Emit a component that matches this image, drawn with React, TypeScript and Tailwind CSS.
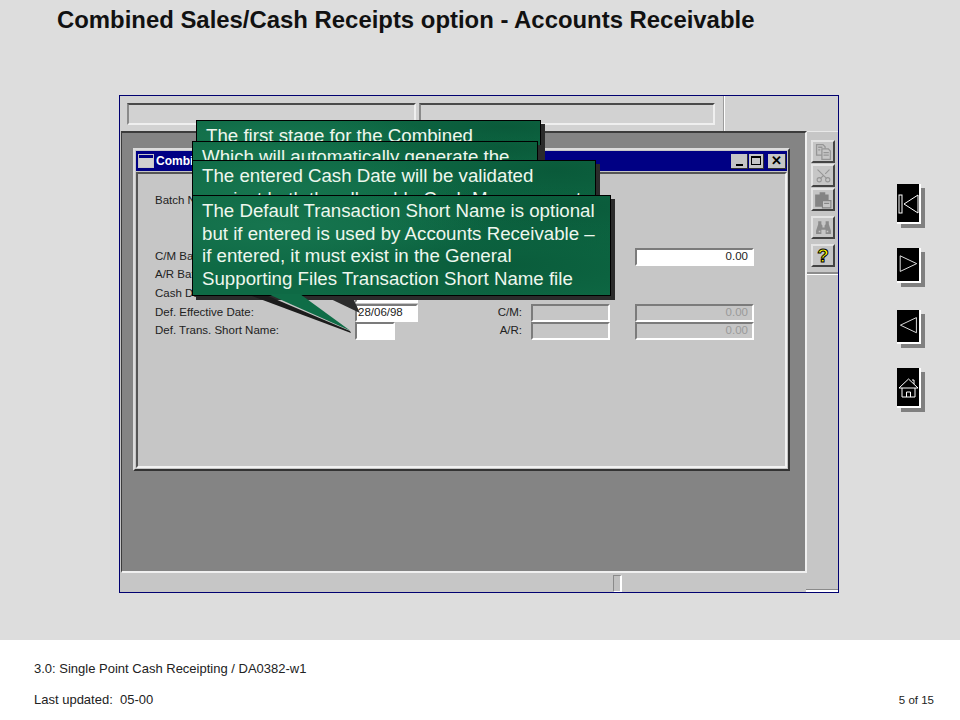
import type { ReactNode } from "react"
import { Scissors } from "lucide-react"

const sunken = "border-2 border-t-[#7b7b7b] border-l-[#7b7b7b] border-r-white border-b-white"

function Field({ className, value, disabled }: { className: string; value?: string; disabled?: boolean }) {
  return (
    <div className={`h-[18px] shrink-0 flex items-center justify-end px-1 text-[11.5px] ${sunken} ${className} ${disabled ? "text-[#9a9a9a]" : "bg-white text-[#222]"}`}>
      {value}
    </div>
  )
}

function FormRow({ label, left, right, className }: { label: string; left?: ReactNode; right?: ReactNode; className?: string }) {
  return (
    <div className={`flex items-center h-[18px] text-[11.5px] text-[#222] ${className ?? ""}`}>
      <div className="w-[200px] shrink-0 whitespace-nowrap">{label}</div>
      <div className="w-[176px] shrink-0 flex">{left}</div>
      <div className="flex items-center">{right}</div>
    </div>
  )
}

function Callout({ className, lines }: { className: string; lines: string[] }) {
  return (
    <div className={`absolute border border-black bg-[#0e6a45] bg-[radial-gradient(ellipse_at_20%_30%,#17754f_0%,transparent_45%),radial-gradient(ellipse_at_75%_70%,#0a5c3b_0%,transparent_50%),radial-gradient(ellipse_at_90%_10%,#0a5a3a_0%,transparent_40%)] pl-[9px] pt-[4px] text-[18.7px] leading-[22.5px] text-[#eef7ee] whitespace-nowrap shadow-[4px_4px_0_#2b2b2b] ${className}`}>
      {lines.map((l) => (
        <div key={l}>{l}</div>
      ))}
    </div>
  )
}

function ToolButton({ children, className }: { children: ReactNode; className?: string }) {
  return (
    <div className={`w-[24px] h-[23px] flex items-center justify-center bg-[#c6c6c6] border-t-2 border-l-2 border-t-[#e4e4e4] border-l-[#e4e4e4] border-r-2 border-b-2 border-r-[#444] border-b-[#444] ${className ?? ""}`}>
      {children}
    </div>
  )
}

function NavButton({ height, className, children }: { height: string; className?: string; children: ReactNode }) {
  return (
    <div className={`w-[24px] bg-black border-r-2 border-b-2 border-white shadow-[4px_4px_0_#808080] ${height} ${className ?? ""}`}>
      <svg viewBox="0 0 22 38" className="w-full h-full" fill="none" stroke="#ffffff" strokeWidth="1">
        {children}
      </svg>
    </div>
  )
}

export default function App() {
  return (
    <div className="w-[960px] h-[720px] flex flex-col overflow-hidden font-['Liberation_Sans',Arial,sans-serif]">
      <main className="h-[640px] bg-[#dddddd]">
        <h1 className="h-[95px] pl-[57px] pt-[7px] text-[23.9px] leading-[26px] font-bold text-[#111]">
          Combined Sales/Cash Receipts option - Accounts Receivable
        </h1>

        <div className="flex">
          {/* Application window */}
          <div className="relative ml-[119px] w-[720px] h-[498px] border border-[#000070] bg-[#c6c6c6] flex flex-col">
            <div className="h-[35px] shrink-0 bg-[#d2d2d2] flex pl-[7px] pt-[7px]">
              <div className="w-[289px] h-[22px] border-2 border-t-[#4a4a4a] border-l-[#8a8a8a] border-r-[#efefef] border-b-[#efefef]" />
              <div className="ml-[3px] w-[296px] h-[22px] border-2 border-t-[#4a4a4a] border-l-[#8a8a8a] border-r-[#efefef] border-b-[#efefef]" />
              <div className="ml-[8px] -mt-[7px] w-[2px] h-[35px] bg-[#9c9c9c] border-r border-white" />
            </div>

            <div className="h-[442px] shrink-0 flex">
              {/* MDI area */}
              <div className="ml-px w-[686px] bg-[#848484] border-t-2 border-l border-r-2 border-b-2 border-t-[#3c3c3c] border-l-[#3c3c3c] border-r-[#f0f0f0] border-b-[#f0f0f0] pl-[11px] pt-[15px]">
                <div className="w-[657px] h-[323px] bg-[#c6c6c6] border-2 border-t-[#dcdcdc] border-l-[#dcdcdc] border-r-[#333] border-b-[#333] p-px flex flex-col">
                  <div className="h-[20px] shrink-0 bg-[#000084] flex items-center pl-[2px] pr-[1px]">
                    <div className="ml-px w-[14px] h-[12px] bg-[#d0d0d0] border-t-[3px] border-[#000084] outline outline-[#c6c6c6]" />
                    <span className="ml-[3px] text-[12px] font-bold text-white">Combined Sales/Cash Receipts</span>
                    <div className="ml-auto flex items-center">
                      <div className="w-[17px] h-[15px] bg-[#c6c6c6] border-r border-b border-[#333] flex items-end justify-center pb-[2px]">
                        <div className="w-[7px] h-[2px] bg-black" />
                      </div>
                      <div className="ml-px w-[15px] h-[15px] bg-[#c6c6c6] border-r border-b border-[#333] flex items-center justify-center">
                        <div className="w-[10px] h-[9px] border border-t-2 border-black" />
                      </div>
                      <div className="ml-[4px] w-[18px] h-[15px] bg-[#c6c6c6] border-r border-b border-[#333] flex items-center justify-center text-[13px] leading-none font-bold text-black">
                        ✕
                      </div>
                    </div>
                  </div>

                  <div className="flex-1 mt-px border-2 border-t-[#555] border-l-[#555] border-r-[#f2f2f2] border-b-[#f2f2f2] pl-[17px] pt-[18px]">
                    <FormRow label="Batch Number:" />
                    <FormRow
                      className="mt-[38px]"
                      label="C/M Batch:"
                      right={
                        <>
                          <div className="w-[104px]" />
                          <Field className="w-[119px]" value="0.00" />
                        </>
                      }
                    />
                    <FormRow label="A/R Batch:" />
                    <FormRow className="mt-px" label="Cash Date:" left={<Field className="w-[63px]" />} />
                    <FormRow
                      className="mt-px"
                      label="Def. Effective Date:"
                      left={<Field className="w-[63px] !justify-start !px-px" value="28/06/98" />}
                      right={
                        <>
                          <span className="w-[32px] -ml-[41px] mr-[1px] text-right">C/M:</span>
                          <div className="ml-[8px]"><Field className="w-[79px]" disabled /></div>
                          <div className="ml-[25px]"><Field className="w-[119px]" value="0.00" disabled /></div>
                        </>
                      }
                    />
                    <FormRow
                      label="Def. Trans. Short Name:"
                      left={<Field className="w-[40px]" />}
                      right={
                        <>
                          <span className="w-[32px] -ml-[41px] mr-[1px] text-right">A/R:</span>
                          <div className="ml-[8px]"><Field className="w-[79px]" disabled /></div>
                          <div className="ml-[25px]"><Field className="w-[119px]" value="0.00" disabled /></div>
                        </>
                      }
                    />
                  </div>
                </div>
              </div>

              {/* Toolbar */}
              <div className="flex-1 flex flex-col">
                <div className="h-[143px] border-t border-t-[#e8e8e8] border-b-2 border-b-[#8c8c8c] pl-[4px] pt-[8px] flex flex-col">
                  <ToolButton>
                    <svg viewBox="0 0 16 16" className="w-[17px] h-[17px]" fill="none" stroke="#969696" strokeWidth="1.2">
                      <path d="M1.5 1.5h6l2 2v8h-8z" />
                      <path d="M6.5 5.5h6l2 2v8h-8z" fill="#c6c6c6" />
                      <path d="M3 4h4M3 6.5h2M8 9h5M8 11.5h5" />
                    </svg>
                  </ToolButton>
                  <ToolButton className="mt-px">
                    <Scissors className="w-[17px] h-[17px] -rotate-90 text-[#969696]" strokeWidth={1.5} />
                  </ToolButton>
                  <ToolButton className="mt-px">
                    <svg viewBox="0 0 16 16" className="w-[18px] h-[18px]">
                      <path d="M1 3h4V1h5v2h3v11H1z" fill="#848484" />
                      <path d="M7.5 8.5h7.5v6.5H7.5z" fill="#c6c6c6" stroke="#848484" />
                      <path d="M9 11h4.5" stroke="#848484" />
                    </svg>
                  </ToolButton>
                  <ToolButton className="mt-[5px]">
                    <svg viewBox="0 0 16 16" className="w-[17px] h-[17px]" fill="#8c8c8c">
                      <path d="M3 2h3v3l1 1v2h2V6l1-1V2h3v3l2 6v3H10v-4H6v4H1v-3l2-6z" />
                      <path d="M3.5 11h1.5v1.5H3.5zM11 11h1.5v1.5H11z" fill="#c6c6c6" />
                    </svg>
                  </ToolButton>
                  <ToolButton className="mt-[5px]">
                    <span className="text-[19px] leading-none font-bold text-[#ffff00] [-webkit-text-stroke:1px_#000]">?</span>
                  </ToolButton>
                </div>
                <div className="flex-1 border-t border-white" />
              </div>
            </div>

            {/* Status bar */}
            <div className="flex-1 flex items-end pl-[493px]">
              <div className="w-[9px] h-[17px] bg-[#c0c0c0] border border-t-[#8a8a8a] border-l-[#8a8a8a] border-r-2 border-r-white border-b-white" />
              <div className="ml-auto w-[32px] h-[3px] border-t border-t-[#8a8a8a] border-b-2 border-b-white" />
            </div>

            {/* Stacked callouts, each one covers the one before */}
            <Callout className="left-[76px] top-[24px] w-[345px] h-[60px]" lines={["The first stage for the Combined"]} />
            <Callout className="left-[72px] top-[45px] w-[346px] h-[60px]" lines={["Which will automatically generate the"]} />
            <Callout
              className="left-[72px] top-[64px] w-[404px] h-[100px]"
              lines={["The entered Cash Date will be validated", "against both the allowable Cash Management"]}
            />
            <svg className="absolute left-[120px] top-[190px] w-[120px] h-[60px]" viewBox="0 0 120 60">
              <path d="M76 6h34l10 21z" fill="#2b2b2b" />
            </svg>
            <Callout
              className="left-[72px] top-[99px] w-[419px] h-[101px]"
              lines={[
                "The Default Transaction Short Name is optional",
                "but if entered is used by Accounts Receivable –",
                "if entered, it must exist in the General",
                "Supporting Files Transaction Short Name file",
              ]}
            />
            {/* Pointer of the top callout */}
            <svg className="absolute left-[130px] top-[198px] w-[102px] h-[40px]" viewBox="0 0 102 40">
              <path d="M2 2h16l82 35 1 2z" fill="#1c1c1c" />
              <path d="M18 0h32l50 36.5z" fill="#0f6d47" />
            </svg>
          </div>

          {/* Slide navigation */}
          <nav className="ml-[58px] mt-[89px] flex flex-col">
            <NavButton height="h-[40px]">
              <rect x="2" y="11" width="3" height="18" />
              <path d="M7 20l14-9v18z" />
            </NavButton>
            <NavButton height="h-[35px] mt-[24px]">
              <path d="M2 9v18l19-9z" />
            </NavButton>
            <NavButton height="h-[34px] mt-[27px]">
              <path d="M2 18l19-9v18z" />
            </NavButton>
            <NavButton height="h-[40px] mt-[24px]">
              <path d="M2 20l9.5-9 9.5 9z" />
              <path d="M5 20v9h13v-9M9.5 29v-5h4v5" />
              <path d="M15 12h2v4" />
            </NavButton>
          </nav>
        </div>
      </main>

      <footer className="h-[80px] bg-white pl-[34px] pr-[26px] pt-[21px] text-[13px] leading-[16px] text-[#222]">
        <div>3.0: Single Point Cash Receipting / DA0382-w1</div>
        <div className="mt-[15px] flex items-center justify-between">
          <span>Last updated:&nbsp; 05-00</span>
          <span className="text-[11.5px]">5 of 15</span>
        </div>
      </footer>
    </div>
  )
}
